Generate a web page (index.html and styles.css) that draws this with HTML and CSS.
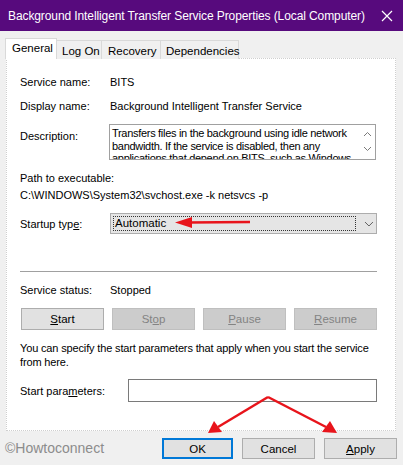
FILE: index.html
```html
<!DOCTYPE html>
<html>
<head>
<meta charset="utf-8">
<link rel="stylesheet" href="styles.css">
</head>
<body>
<div class="window">
  <div class="titlebar">
    <span class="title">Background Intelligent Transfer Service Properties (Local Computer)</span>
    <svg class="close" width="12" height="12" viewBox="0 0 12 12"><path d="M1 1 L11 11 M11 1 L1 11" stroke="#fff" stroke-width="1.2" fill="none"/></svg>
  </div>
  <div class="tabs">
    <div class="tab active">General</div>
    <div class="tab">Log On</div>
    <div class="tab">Recovery</div>
    <div class="tab">Dependencies</div>
  </div>
  <div class="panel">
    <div class="row first"><span class="label">Service name:</span><span>BITS</span></div>
    <div class="row gap10"><span class="label">Display name:</span><span>Background Intelligent Transfer Service</span></div>
    <div class="row desc-row gap11">
      <span class="label desc-label">Description:</span>
      <div class="desc-box">
        <div class="desc-text">Transfers files in the background using idle network bandwidth. If the service is disabled, then any applications that depend on BITS, such as Windows Update, will not be able to download.</div>
        <div class="scroll">
          <svg width="9" height="30" viewBox="0 0 9 30"><path d="M1 9 L4.5 5.5 L8 9" stroke="#7a7a7a" stroke-width="1" fill="none"/><path d="M1 20 L4.5 23.5 L8 20" stroke="#7a7a7a" stroke-width="1" fill="none"/></svg>
        </div>
      </div>
    </div>
    <div class="path-label gap11">Path to executable:</div>
    <div class="path-value">C:\WINDOWS\System32\svchost.exe -k netsvcs -p</div>
    <div class="row startup gap11">
      <span class="label">Startup typ<u>e</u>:</span>
      <div class="combo">
        <div class="combo-focus">Automatic</div>
        <svg class="chev" width="10" height="6" viewBox="0 0 10 6"><path d="M1 1 L5 5 L9 1" stroke="#606060" stroke-width="1" fill="none"/></svg>
      </div>
    </div>
    <div class="separator"></div>
    <div class="row status"><span class="label">Service status:</span><span>Stopped</span></div>
    <div class="btn-row">
      <div class="btn"><u>S</u>tart</div>
      <div class="btn disabled">St<u>o</u>p</div>
      <div class="btn disabled"><u>P</u>ause</div>
      <div class="btn disabled"><u>R</u>esume</div>
    </div>
    <p class="note">You can specify the start parameters that apply when you start the service from here.</p>
    <div class="row params">
      <span class="label params-label">Start para<u>m</u>eters:</span>
      <div class="input"></div>
    </div>
  </div>
  <div class="footer">
    <span class="watermark">©Howtoconnect</span>
    <div class="footer-btns">
      <div class="fbtn default">OK</div>
      <div class="fbtn">Cancel</div>
      <div class="fbtn"><u>A</u>pply</div>
    </div>
  </div>
  <svg class="arrows" width="403" height="465" viewBox="0 0 403 465">
    <g stroke="#e8141b" fill="#e8141b">
      <line x1="250" y1="222" x2="188" y2="222.5" stroke-width="2.5"/>
      <polygon points="175,222.5 192,217 192,228" stroke="none"/>
      <line x1="268" y1="397" x2="218" y2="427" stroke-width="2.5"/>
      <polygon points="208,433 214,421 222,432" stroke="none"/>
      <line x1="268" y1="397" x2="326" y2="427" stroke-width="2.5"/>
      <polygon points="337,433 322,432 330,421" stroke="none"/>
    </g>
  </svg>
</div>
</body>
</html>
```
FILE: styles.css
```css
* { box-sizing: border-box; }
html, body { margin: 0; padding: 0; }
body {
  width: 403px;
  height: 465px;
  overflow: hidden;
  background: #f0f0f0;
  font-family: "Liberation Sans", Arial, sans-serif;
  font-size: 11px;
  color: #000;
}
.window {
  position: relative;
  width: 403px;
  height: 465px;
}
.titlebar {
  height: 31px;
  background: #570a7d;
  color: #fff;
  display: flex;
  align-items: center;
  padding-left: 8px;
  padding-right: 10px;
}
.title {
  flex: 1;
  font-size: 12px;
  letter-spacing: -0.1px;
  white-space: nowrap;
}
.close { display: block; margin-top: 1px; }

.tabs {
  display: flex;
  align-items: flex-end;
  height: 21px;
  margin-top: 7px;
  padding-left: 5px;
  position: relative;
  z-index: 2;
  margin-bottom: -1px;
}
.tab {
  height: 19px;
  border: 1px solid #d9d9d9;
  border-bottom: none;
  border-left: none;
  background: #f0f0f0;
  display: flex;
  align-items: center;
  padding-top: 2px;
  font-size: 11.5px;
  white-space: nowrap;
}
.tab:nth-child(2) { width: 45px; padding-left: 5px; }
.tab:nth-child(3) { width: 59px; padding-left: 6px; }
.tab:nth-child(4) { width: 78px; padding-left: 5px; }
.tab.active {
  width: 52px;
  height: 21px;
  background: #fff;
  border-left: 1px solid #d9d9d9;
  padding-left: 6px;
  align-items: flex-start;
  padding-top: 3px;
}

.panel {
  margin-left: 6px;
  width: 390px;
  height: 373px;
  background: #fff;
  border: 1px dotted #cfcfcf;
  padding: 0 18px 0 13px;
  position: relative;
  z-index: 1;
}
.row {
  display: flex;
  align-items: center;
  height: 14px;
  white-space: nowrap;
}
.row.first { margin-top: 16px; }
.gap10 { margin-top: 10px; }
.gap11 { margin-top: 11px; }
.label { width: 90px; flex: none; }

.desc-row {
  height: 36px;
  align-items: flex-start;
}
.desc-label { padding-top: 6px; margin-right: -1px; }
.desc-box {
  width: 267px;
  height: 36px;
  border: 1px solid #a0a0a0;
  display: flex;
  overflow: hidden;
}
.desc-text {
  flex: 1;
  line-height: 12.5px;
  padding: 2px 0 0 2px;
  height: 34px;
  overflow: hidden;
  font-size: 11px;
  letter-spacing: -0.3px;
  white-space: normal;
}
.scroll {
  width: 15px;
  flex: none;
  display: flex;
  justify-content: center;
  padding-top: 2px;
}

.path-label { height: 14px; line-height: 14px; }
.path-value { height: 14px; line-height: 14px; margin-top: 3px; }

.startup { height: 21px; }
.combo {
  width: 267px;
  height: 21px;
  background: #e5e5e5;
  border: 1px solid #adadad;
  display: flex;
  align-items: center;
  padding: 2px;
}
.combo-focus {
  width: 245px;
  height: 15px;
  border: 1px dotted #333;
  line-height: 13px;
  padding-left: 1px;
  font-size: 11.5px;
}
.chev { margin-left: 8px; }

.separator {
  margin-top: 37px;
  height: 1px;
  background: #a0a0a0;
}
.status { margin-top: 11px; }

.btn-row {
  margin-top: 11px;
  display: grid;
  grid-template-columns: repeat(4, 1fr);
  column-gap: 8px;
  height: 22px;
  padding-left: 1px;
}
.btn {
  border: 1px solid #adadad;
  background: #e1e1e1;
  display: flex;
  align-items: center;
  justify-content: center;
  font-size: 11.5px;
}
.btn.disabled {
  background: #cccccc;
  border-color: #bfbfbf;
  color: #838383;
}

.note {
  margin: 11px -10px 0 0;
  line-height: 14px;
  font-size: 11px;
  letter-spacing: -0.15px;
}
.params {
  margin-top: 10px;
  height: 23px;
}
.params-label { width: 108px; }
.input {
  width: 249px;
  height: 23px;
  border: 1px solid #7a7a7a;
  background: #fff;
}

.footer {
  display: flex;
  align-items: flex-start;
  padding-top: 7px;
  padding-left: 5px;
}
.watermark {
  font-size: 14px;
  color: #8c8c8c;
  margin-top: 2px;
  width: 157px;
}
.footer-btns {
  display: flex;
  gap: 9px;
}
.fbtn {
  width: 73px;
  height: 21px;
  background: #e1e1e1;
  border: 1px solid #adadad;
  display: flex;
  align-items: center;
  justify-content: center;
  font-size: 11.5px;
}
.fbtn.default {
  width: 71px;
  border: 2px solid #0078d7;
}
.arrows {
  position: absolute;
  left: 0;
  top: 0;
  pointer-events: none;
  z-index: 5;
}
```
